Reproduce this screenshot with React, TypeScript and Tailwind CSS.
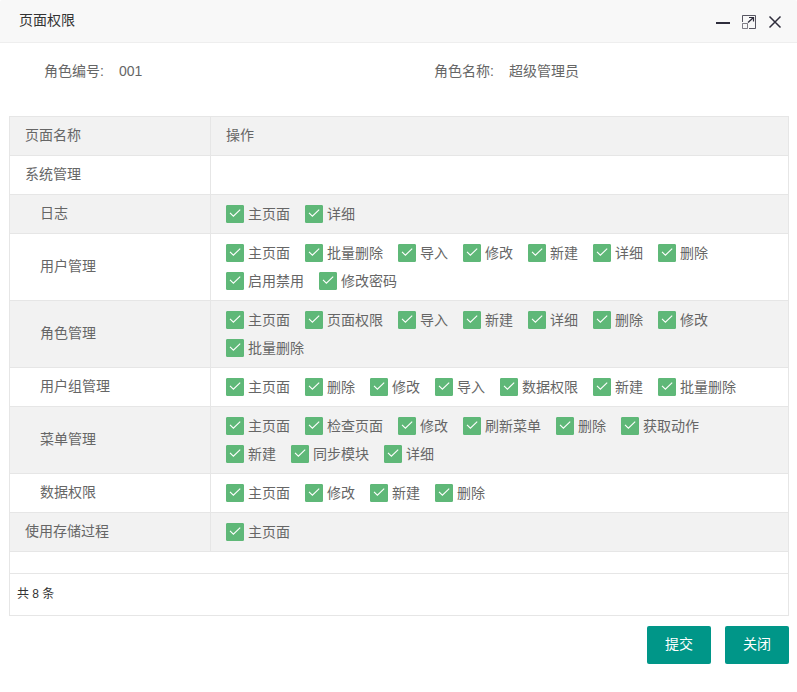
import { useState } from "react";

type Row = { name: string; child?: boolean; actions: string[] };

const rows: Row[] = [
  { name: "系统管理", actions: [] },
  { name: "日志", child: true, actions: ["主页面", "详细"] },
  {
    name: "用户管理",
    child: true,
    actions: ["主页面", "批量删除", "导入", "修改", "新建", "详细", "删除", "启用禁用", "修改密码"],
  },
  {
    name: "角色管理",
    child: true,
    actions: ["主页面", "页面权限", "导入", "新建", "详细", "删除", "修改", "批量删除"],
  },
  {
    name: "用户组管理",
    child: true,
    actions: ["主页面", "删除", "修改", "导入", "数据权限", "新建", "批量删除"],
  },
  {
    name: "菜单管理",
    child: true,
    actions: ["主页面", "检查页面", "修改", "刷新菜单", "删除", "获取动作", "新建", "同步模块", "详细"],
  },
  { name: "数据权限", child: true, actions: ["主页面", "修改", "新建", "删除"] },
  { name: "使用存储过程", actions: ["主页面"] },
];

function ActionCheck({ label }: { label: string }) {
  const [checked, setChecked] = useState(true);
  return (
    <label className="mr-[15px] flex h-7 cursor-pointer items-center gap-1">
      <span className="grid size-[18px]">
        <input
          type="checkbox"
          checked={checked}
          onChange={() => setChecked(!checked)}
          className="col-start-1 row-start-1 size-[18px] cursor-pointer appearance-none rounded-[1px] border border-[#d2d2d2] bg-white checked:border-[#5fb878] checked:bg-[#5fb878]"
        />
        <svg
          viewBox="0 0 18 18"
          className="pointer-events-none col-start-1 row-start-1 size-[18px]"
          fill="none"
          stroke="#fff"
          strokeWidth="1.1"
        >
          {checked && <path d="M4 7.8 L7.4 11.2 L14.2 4.6" />}
        </svg>
      </span>
      {label}
    </label>
  );
}

function Field({ label, value }: { label: string; value: string }) {
  return (
    <div className="flex gap-[15px] pl-[35px]">
      <dt>{label}:</dt>
      <dd>{value}</dd>
    </div>
  );
}

export default function App() {
  return (
    <div className="bg-white pb-7 font-['Liberation_Sans','Noto_Sans_CJK_SC',sans-serif] text-sm leading-5 text-[#666]">
      <header className="flex h-[43px] items-center justify-between rounded-t-xs border-b border-[#eee] bg-[#f8f8f8] pr-[15px] pb-[2px] pl-[19px]">
        <h1 className="text-[#333]">页面权限</h1>
        <div className="flex items-center gap-3 pt-1 text-[#2e2d3c]">
          <button type="button" aria-label="最小化" className="cursor-pointer">
            <svg viewBox="0 0 14 14" className="size-[14px]">
              <path d="M0 7h14v2H0z" fill="currentColor" />
            </svg>
          </button>
          <button type="button" aria-label="最大化" className="cursor-pointer">
            <svg viewBox="0 0 14 14" className="size-[14px]" fill="none" stroke="currentColor">
              <path d="M0.5 7V0.5H13.5V13.5H7" strokeOpacity="0.8" />
              <path d="M0.5 8.5H5.5V13.5H0.5z" strokeOpacity="0.6" />
              <path d="M6 7.5L11.5 2.5" strokeWidth="1.3" />
              <path d="M7 2.5H11.5V6.5" strokeWidth="1.2" />
            </svg>
          </button>
          <button type="button" aria-label="关闭窗口" className="cursor-pointer">
            <svg viewBox="0 0 14 14" className="size-[14px]" fill="none" stroke="currentColor" strokeWidth="1.5">
              <path d="M1.5 1.5L12.5 12.5M12.5 1.5L1.5 12.5" />
            </svg>
          </button>
        </div>
      </header>

      <main className="pr-2 pl-[9px]">
        <dl className="grid grid-cols-2 pt-[18px] pb-[35px]">
          <Field label="角色编号" value="001" />
          <Field label="角色名称" value="超级管理员" />
        </dl>

        <section className="border border-[#e6e6e6]">
          <table className="w-full border-separate border-spacing-0 text-left">
            <thead>
              <tr className="bg-[#f2f2f2]">
                <th className="w-[201px] border-r border-b border-[#e6e6e6] px-[15px] pt-2 pb-[10px] font-normal">页面名称</th>
                <th className="border-b border-[#e6e6e6] px-[15px] pt-2 pb-[10px] font-normal">操作</th>
              </tr>
            </thead>
            <tbody>
              {rows.map((row) => (
                <tr key={row.name} className="even:bg-[#f2f2f2]">
                  <td className={`border-r border-b border-[#e6e6e6] pt-2 pr-[15px] pb-[10px] ${row.child ? "pl-[30px]" : "pl-[15px]"}`}>
                    {row.name}
                  </td>
                  <td className="border-b border-[#e6e6e6] px-[15px] py-[5px]">
                    <div className="flex flex-wrap">
                      {row.actions.map((a) => (
                        <ActionCheck key={a} label={a} />
                      ))}
                    </div>
                  </td>
                </tr>
              ))}
            </tbody>
          </table>
          <p className="mt-[21px] flex h-[42px] items-center border-t border-[#e6e6e6] px-[7px] pb-[2px] text-xs text-[#333]">
            共 8 条
          </p>
        </section>

        <div className="mt-[10px] flex justify-end gap-[14px] text-white">
          <button type="button" className="h-[38px] cursor-pointer rounded-xs bg-[#009688] px-[18px] pb-[2px]">
            提交
          </button>
          <button type="button" className="h-[38px] cursor-pointer rounded-xs bg-[#009688] px-[18px] pb-[2px]">
            关闭
          </button>
        </div>
      </main>
    </div>
  );
}
